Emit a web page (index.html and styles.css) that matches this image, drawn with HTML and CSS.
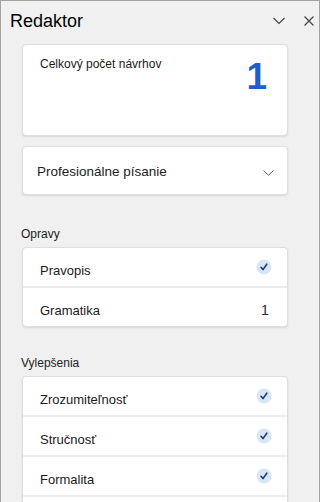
FILE: index.html
```html
<!DOCTYPE html>
<html lang="sk">
<head>
    <meta charset="UTF-8">
    <meta name="viewport" content="width=device-width, initial-scale=1.0">
    <title>Redaktor</title>
    <link rel="stylesheet" href="styles.css">
</head>
<body>
    <div class="pane">
        <header class="pane-header">
            <h1 class="pane-title">Redaktor</h1>
            <div class="pane-actions">
                <svg class="icon-chevron" width="12" height="8" viewBox="0 0 12 8"><path d="M0.5 1 L6 6.5 L11.5 1" fill="none" stroke="#444" stroke-width="1.2"/></svg>
                <svg class="icon-close" width="10" height="10" viewBox="0 0 10 10"><path d="M0.5 0.5 L9.5 9.5 M9.5 0.5 L0.5 9.5" fill="none" stroke="#444" stroke-width="1.2"/></svg>
            </div>
        </header>

        <div class="card total">
            <span class="total-label">Celkový počet návrhov</span>
            <span class="total-count">1</span>
        </div>

        <div class="card select">
            <span class="select-label">Profesionálne písanie</span>
            <svg class="select-chevron" width="11" height="6" viewBox="0 0 11 6"><path d="M0.5 0.5 L5.5 5.3 L10.5 0.5" fill="none" stroke="#666" stroke-width="1"/></svg>
        </div>

        <div class="section">
            <div class="section-title">Opravy</div>
            <div class="card list">
                <div class="row">
                    <span class="row-label">Pravopis</span>
                    <svg class="check" width="16" height="16" viewBox="0 0 16 16"><circle cx="8" cy="8" r="7.5" fill="#d9e4f5"/><path d="M5 8.3 L7 10.6 L10.8 5.2" fill="none" stroke="#1f3b78" stroke-width="1.6" stroke-linecap="round" stroke-linejoin="round"/></svg>
                </div>
                <div class="row">
                    <span class="row-label">Gramatika</span>
                    <span class="row-count">1</span>
                </div>
            </div>
        </div>

        <div class="section">
            <div class="section-title">Vylepšenia</div>
            <div class="card list">
                <div class="row">
                    <span class="row-label">Zrozumiteľnosť</span>
                    <svg class="check" width="16" height="16" viewBox="0 0 16 16"><circle cx="8" cy="8" r="7.5" fill="#d9e4f5"/><path d="M5 8.3 L7 10.6 L10.8 5.2" fill="none" stroke="#1f3b78" stroke-width="1.6" stroke-linecap="round" stroke-linejoin="round"/></svg>
                </div>
                <div class="row">
                    <span class="row-label">Stručnosť</span>
                    <svg class="check" width="16" height="16" viewBox="0 0 16 16"><circle cx="8" cy="8" r="7.5" fill="#d9e4f5"/><path d="M5 8.3 L7 10.6 L10.8 5.2" fill="none" stroke="#1f3b78" stroke-width="1.6" stroke-linecap="round" stroke-linejoin="round"/></svg>
                </div>
                <div class="row">
                    <span class="row-label">Formalita</span>
                    <svg class="check" width="16" height="16" viewBox="0 0 16 16"><circle cx="8" cy="8" r="7.5" fill="#d9e4f5"/><path d="M5 8.3 L7 10.6 L10.8 5.2" fill="none" stroke="#1f3b78" stroke-width="1.6" stroke-linecap="round" stroke-linejoin="round"/></svg>
                </div>
                <div class="row"></div>
            </div>
        </div>
    </div>
</body>
</html>
```

FILE: styles.css
```css
body {
    margin: 0;
    padding: 0;
    font-family: "Liberation Sans", Arial, sans-serif;
    color: #1b1b1b;
    background: #f0f0f0;
}
.pane {
    box-sizing: border-box;
    width: 320px;
    height: 502px;
    overflow: hidden;
    background: #f0f0f0;
    border: 1px solid #a3a3a3;
    border-bottom: none;
    padding: 9px 0 0 20px;
}
.pane-header {
    display: flex;
    justify-content: space-between;
    align-items: flex-start;
    height: 34px;
}
.pane-title {
    margin: 0 0 0 -11px;
    font-size: 18px;
    line-height: 22px;
    font-weight: normal;
    color: #000;
}
.pane-actions {
    display: flex;
    align-items: center;
    gap: 19px;
    padding: 6px 5px 0 0;
}
.icon-chevron {
    display: block;
}
.icon-close {
    display: block;
}
.card {
    box-sizing: border-box;
    width: 266px;
    margin-left: 1px;
    background: #fff;
    border: 1px solid #dedede;
    border-radius: 4px;
    box-shadow: 0 1px 2px rgba(0, 0, 0, 0.1);
}
.total {
    height: 92px;
    display: flex;
    justify-content: space-between;
    align-items: flex-start;
    padding: 11px 20px 0 17px;
}
.total-label {
    font-size: 12px;
    line-height: 16px;
}
.total-count {
    margin-top: 2px;
    font-size: 37px;
    line-height: 37px;
    font-weight: bold;
    color: #1d5ec8;
}
.select {
    height: 49px;
    margin-top: 10px;
    margin-bottom: 31px;
    display: flex;
    justify-content: space-between;
    align-items: flex-start;
    padding: 16px 13px 0 14px;
}
.select-label {
    font-size: 13.5px;
    line-height: 18px;
    color: #222;
}
.select-chevron {
    display: block;
    margin-top: 7px;
}
.section {
    margin-top: 28px;
}
.section-title {
    font-size: 12px;
    line-height: 16px;
    margin-bottom: 5px;
    color: #222;
}
.list {
    overflow: hidden;
}
.row {
    height: 38px;
    display: flex;
    justify-content: space-between;
    align-items: center;
    padding: 0 15px 0 17px;
}
.row + .row {
    border-top: 2px solid #ececec;
}
.row-label {
    margin-top: 8px;
    font-size: 13px;
    line-height: 16px;
    color: #1b1b1b;
}
.row-count {
    margin-top: 6px;
    margin-right: 3px;
    font-size: 15px;
    line-height: 18px;
    color: #333;
}
.check {
    display: block;
}
```
